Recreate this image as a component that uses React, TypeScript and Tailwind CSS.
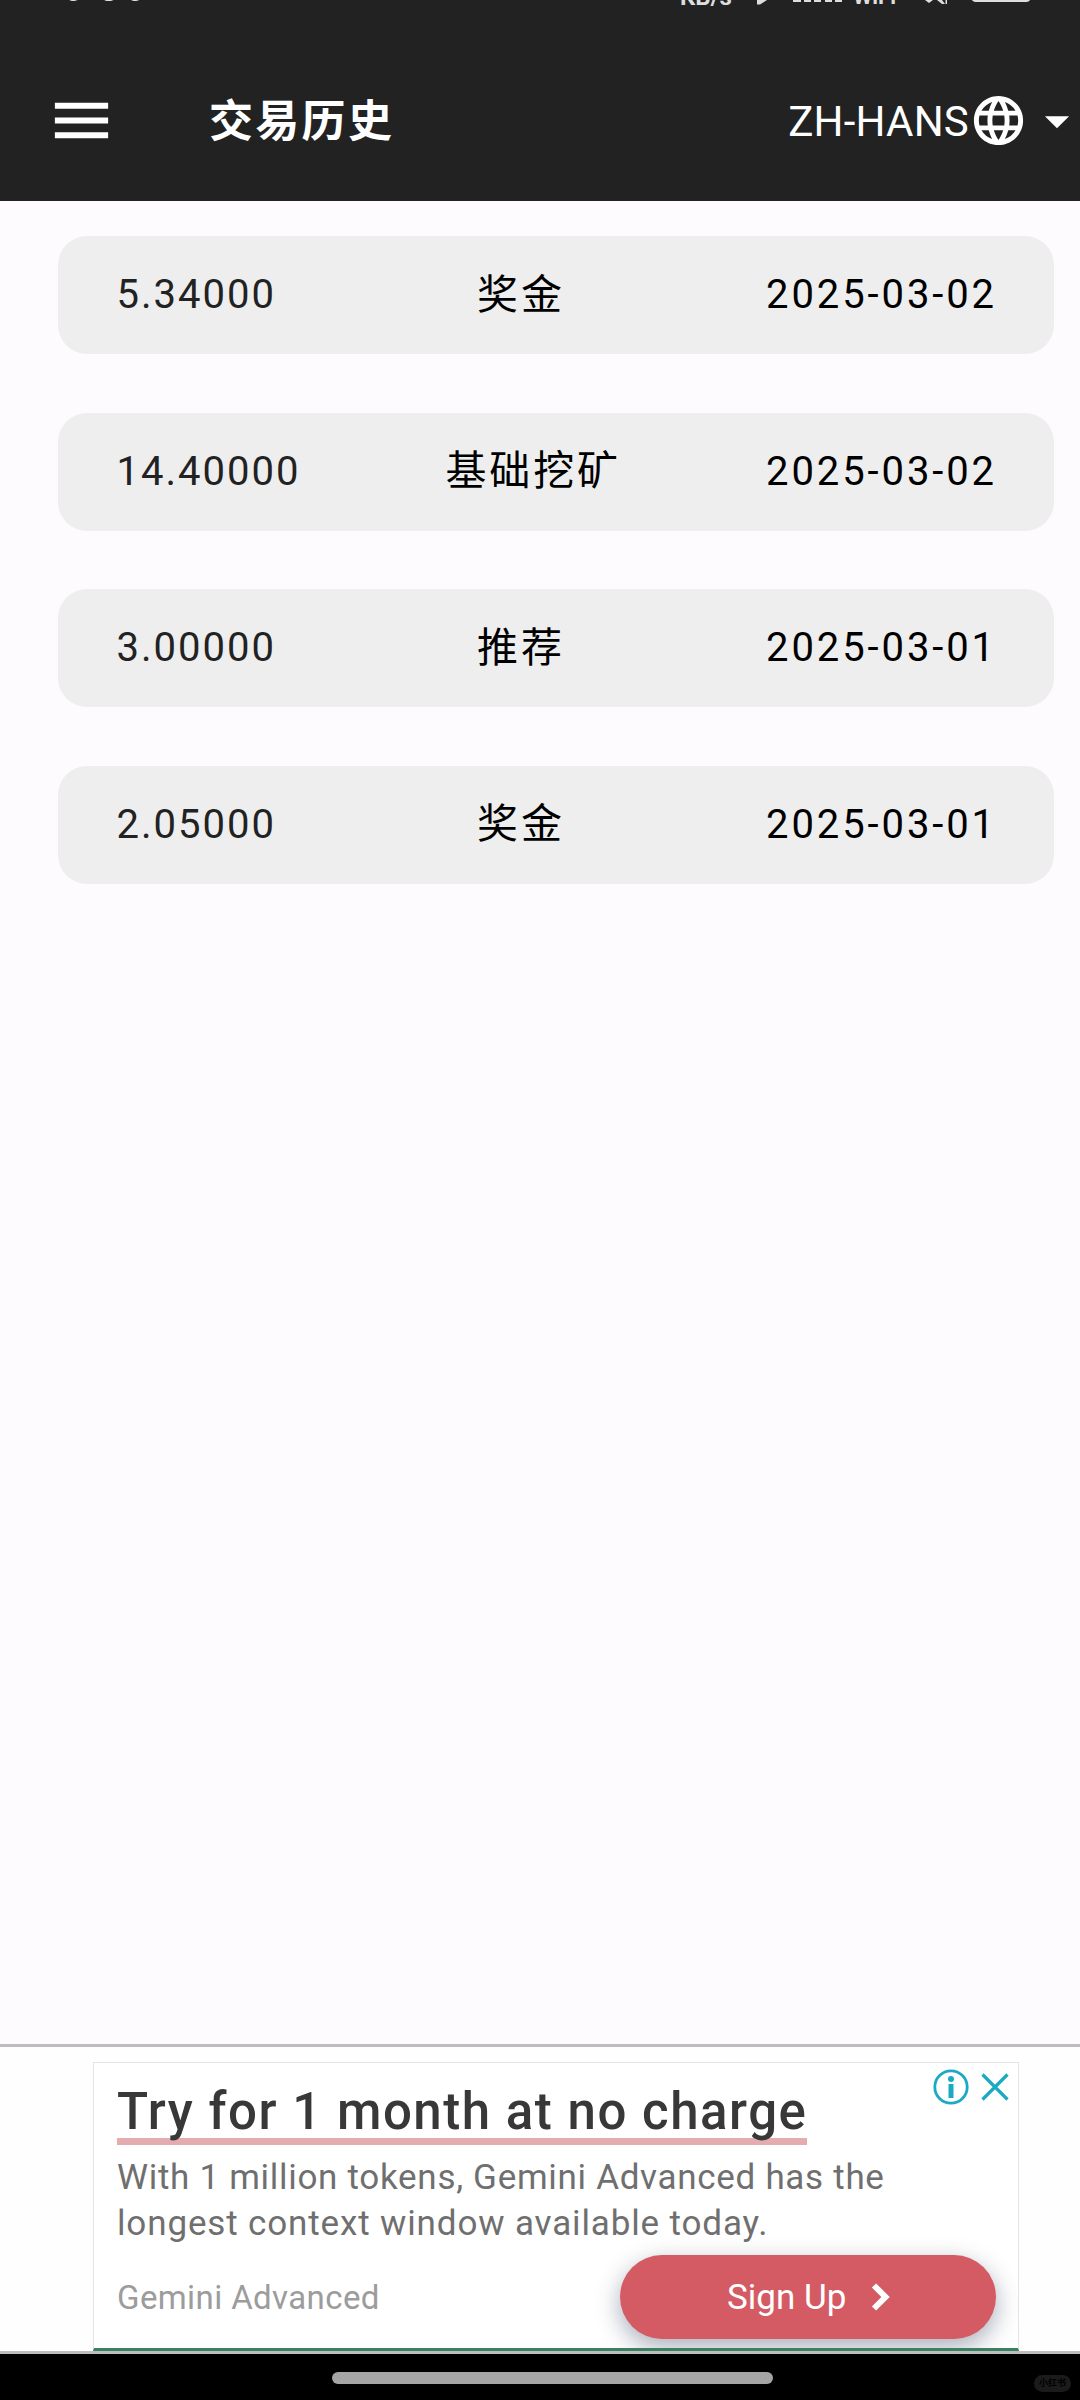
import { MdArrowDropDown, MdLanguage, MdMenu } from 'react-icons/md';

type Transaction = {
  amount: string;
  type: string;
  date: string;
};

const transactions: Transaction[] = [
  { amount: '5.34000', type: '奖金', date: '2025-03-02' },
  { amount: '14.40000', type: '基础挖矿', date: '2025-03-02' },
  { amount: '3.00000', type: '推荐', date: '2025-03-01' },
  { amount: '2.05000', type: '奖金', date: '2025-03-01' },
];

// Only the lower edge of the status bar is visible above the header
function StatusBar() {
  return (
    <div className="relative h-[6px] overflow-hidden text-[#dedede]">
      <span className="absolute bottom-[-5px] left-[62px] flex text-[38px] leading-[46px]">
        <span>6</span>
        <span className="ml-[15px]">3</span>
        <span className="ml-[4px]">6</span>
      </span>
      <span className="absolute bottom-[-5px] left-[680px] text-[24px] font-bold leading-[28px]">KB/s</span>
      <span className="absolute bottom-[-5px] left-[853px] text-[22px] font-bold leading-[28px]">WiFi</span>
      <svg className="absolute left-0 top-0" width="1080" height="6" viewBox="0 0 1080 6" fill="currentColor">
        <path d="M757 0h10l-7 4.5h-3z" />
        <path d="M793 0h8v2h-8zM804 0h7v2h-7zM814 0h7v2h-7zM825 0h7v2h-7zM835 0h7v2h-7z" />
        <path d="M925 0h8l-4 3zM937 0h5l3 4h-3zM945.5 0h1.500v4h-1.500z" />
        <path d="M972 0h58q-1 2-5 2h-48q-4 0-5-2z" />
      </svg>
    </div>
  );
}

function Header() {
  return (
    <header className="h-[201px] bg-[#222222] text-white">
      <StatusBar />
      <div className="flex h-[195px] items-center pl-[45.500px] pt-[34px]">
        <MdMenu className="size-[71px] shrink-0" />
        <h1 className="ml-[92.500px] pt-[2px] text-[44px] font-bold leading-none tracking-[2.300px]">交易历史</h1>
        <div className="ml-auto flex items-center">
          <span className="pt-[2px] text-[42px] leading-none tracking-[0.200px]">ZH-HANS</span>
          <MdLanguage className="size-[59px]" />
          <MdArrowDropDown className="-mr-[6px] size-[58px]" />
        </div>
      </div>
    </header>
  );
}

function TransactionRow({ amount, type, date }: Transaction) {
  return (
    <li className="flex h-[118px] items-center justify-between rounded-[29px] bg-[#eeeeee] pl-[58.500px] pr-[57px] text-[40px] leading-none text-black">
      <span className="tracking-[2px] text-[#222222]">{amount}</span>
      <span className="text-[41px] tracking-[2.900px]">{type}</span>
      <span className="tracking-[2.900px]">{date}</span>
    </li>
  );
}

function AdBanner() {
  return (
    <section className="h-[310px] border-b-[3px] border-t-[3px] border-[#bdbdbd] bg-[#fefefe] pl-[93px] pr-[61px] pt-[15px]">
      <div className="relative h-[289px] overflow-hidden border border-b-[3px] border-[#e4e4e4] border-b-[#3a8163] bg-white pl-[23px]">
        <div className="absolute right-[9px] top-[6px] flex items-center gap-[12px] text-[#1ba9c4]">
          <svg width="36" height="36" viewBox="0 0 36 36" fill="none" stroke="currentColor">
            <circle cx="18" cy="18" r="16.2" strokeWidth="2.8" />
            <circle cx="18" cy="10" r="3" fill="currentColor" stroke="none" />
            <path d="M18 15v14" strokeWidth="5" />
          </svg>
          <svg width="28" height="28" viewBox="0 0 28 28" fill="none" stroke="currentColor" strokeWidth="3.2">
            <path d="M1.500 1.500l25 25M26.500 1.500l-25 25" />
          </svg>
        </div>
        <h2 className="mt-[17px] h-[65px] w-[690px] whitespace-nowrap border-b-[7px] border-[#e5acb0] text-[51px] font-medium leading-[64px] tracking-[1.520px] text-[#383838]">
          Try for 1 month at no charge
        </h2>
        <p className="mt-[10px] whitespace-nowrap text-[35px] leading-[45.500px] text-[#6f6f6f]">
          <span className="tracking-[0.700px]">With 1 million tokens, Gemini Advanced has the</span>
          <br />
          <span className="tracking-[0.860px]">longest context window available today.</span>
        </p>
        <div className="mt-[9px] flex items-center justify-between pr-[22px]">
          <span className="text-[33px] leading-none tracking-[0.400px] text-[#9c9c9c]">Gemini Advanced</span>
          <button className="flex h-[84px] w-[376px] items-center rounded-full bg-[#d45b64] pl-[107px] text-[35px] leading-none text-white shadow-[0_8px_24px_rgba(40,50,80,0.4)]">
            Sign Up
            <svg className="ml-[25px]" width="20" height="28" viewBox="0 0 20 28" fill="none" stroke="currentColor" strokeWidth="6">
              <path d="M3 2.500l11.500 11.500L3 25.500" />
            </svg>
          </button>
        </div>
      </div>
    </section>
  );
}

function NavigationBar() {
  return (
    <footer className="relative flex h-[46px] justify-center bg-black pt-[18px]">
      <div className="ml-[24px] h-[12px] w-[441px] rounded-full bg-[#a5a5a5]" />
      <span className="absolute right-[9px] top-[21px] flex h-[17px] w-[37px] items-center justify-center rounded-full bg-[#1b1b1b] text-[9px] font-bold leading-none text-black">
        小红书
      </span>
    </footer>
  );
}

export default function App() {
  return (
    <div className="flex h-[2400px] w-[1080px] flex-col overflow-hidden bg-[#fdfbfe] font-[Roboto,'Noto_Sans_CJK_SC',sans-serif]">
      <Header />
      <main className="flex-1 pl-[58px] pr-[26px] pt-[35px]">
        <ul className="flex flex-col gap-[58.500px]">
          {transactions.map((item, index) => (
            <TransactionRow key={index} {...item} />
          ))}
        </ul>
      </main>
      <AdBanner />
      <NavigationBar />
    </div>
  );
}
